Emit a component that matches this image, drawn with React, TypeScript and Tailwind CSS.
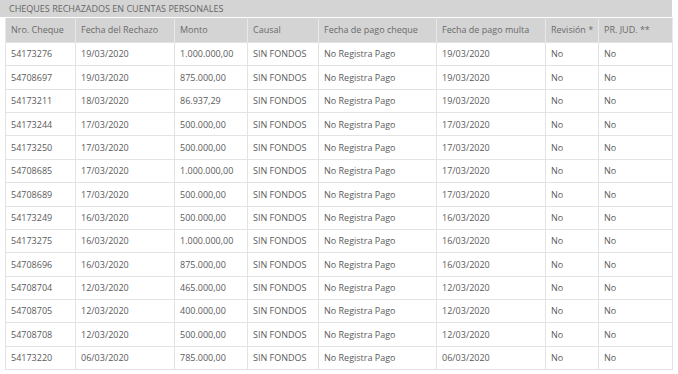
import React from 'react';

const cols = [70, 99, 73, 71, 118, 109, 53, 74];
const headers = ['Nro. Cheque', 'Fecha del Rechazo', 'Monto', 'Causal', 'Fecha de pago cheque', 'Fecha de pago multa', 'Revisión *', 'PR. JUD. **'];

const rows: [string, string, string, string][] = [
  ['54173276', '19/03/2020', '1.000.000,00', '19/03/2020'],
  ['54708697', '19/03/2020', '875.000,00', '19/03/2020'],
  ['54173211', '18/03/2020', '86.937,29', '19/03/2020'],
  ['54173244', '17/03/2020', '500.000,00', '17/03/2020'],
  ['54173250', '17/03/2020', '500.000,00', '17/03/2020'],
  ['54708685', '17/03/2020', '1.000.000,00', '17/03/2020'],
  ['54708689', '17/03/2020', '500.000,00', '17/03/2020'],
  ['54173249', '16/03/2020', '500.000,00', '16/03/2020'],
  ['54173275', '16/03/2020', '1.000.000,00', '16/03/2020'],
  ['54708696', '16/03/2020', '875.000,00', '16/03/2020'],
  ['54708704', '12/03/2020', '465.000,00', '12/03/2020'],
  ['54708705', '12/03/2020', '400.000,00', '12/03/2020'],
  ['54708708', '12/03/2020', '500.000,00', '12/03/2020'],
  ['54173220', '06/03/2020', '785.000,00', '06/03/2020'],
];

const App: React.FC = () => {
  return (
    <div className="w-[678px] h-[374px] bg-white overflow-hidden pl-[5px] pr-[6px] text-[9px] text-[#5a5a5a]" style={{ fontFamily: '"Open Sans", "Liberation Sans", sans-serif' }}>
      <div className="h-[17px] bg-[#d4d4d4] -ml-[5px] pl-[9px] flex items-center text-[#666]">
        CHEQUES RECHAZADOS EN CUENTAS PERSONALES
      </div>
      <table className="table-fixed border-collapse w-[667px]">
        <colgroup>
          {cols.map((w, i) => (
            <col key={i} style={{ width: w }} />
          ))}
        </colgroup>
        <thead>
          <tr className="h-[25px] bg-[#d4d4d4]">
            {headers.map((h) => (
              <th key={h} className="font-normal text-left pl-[5px] border-x border-t border-[#e8e8e8] border-t-white text-[#6a6a6a] whitespace-nowrap">
                {h}
              </th>
            ))}
          </tr>
        </thead>
        <tbody>
          {rows.map((r) => (
            <tr key={r[0]} className="h-[23.36px]">
              {[r[0], r[1], r[2], 'SIN FONDOS', 'No Registra Pago', r[3], 'No', 'No'].map((c, i) => (
                <td key={i} className="pl-[5px] border border-[#e3e3e3] whitespace-nowrap">
                  {c}
                </td>
              ))}
            </tr>
          ))}
        </tbody>
      </table>
    </div>
  );
};

export default App;
